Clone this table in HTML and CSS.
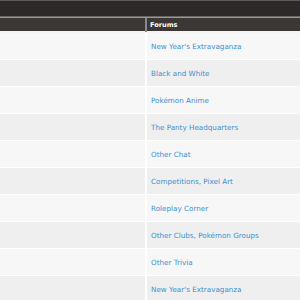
FILE: index.html
```html
<!DOCTYPE html>
<html>
<head>
<meta charset="utf-8">
<link rel="stylesheet" href="styles.css">
</head>
<body>
<div class="topbar"></div>
<div class="table">
  <div class="head">
    <div class="cell first"></div>
    <div class="cell forums">Forums</div>
  </div>
  <div class="row odd"><div class="cell first"></div><div class="cell"><a href="#">New Year's Extravaganza</a></div></div>
  <div class="row even"><div class="cell first"></div><div class="cell"><a href="#">Black and White</a></div></div>
  <div class="row odd"><div class="cell first"></div><div class="cell"><a href="#">Pokémon Anime</a></div></div>
  <div class="row even"><div class="cell first"></div><div class="cell"><a href="#">The Panty Headquarters</a></div></div>
  <div class="row odd"><div class="cell first"></div><div class="cell"><a href="#">Other Chat</a></div></div>
  <div class="row even"><div class="cell first"></div><div class="cell"><a href="#">Competitions</a>, <a href="#">Pixel Art</a></div></div>
  <div class="row odd"><div class="cell first"></div><div class="cell"><a href="#">Roleplay Corner</a></div></div>
  <div class="row even"><div class="cell first"></div><div class="cell"><a href="#">Other Clubs</a>, <a href="#">Pokémon Groups</a></div></div>
  <div class="row odd"><div class="cell first"></div><div class="cell"><a href="#">Other Trivia</a></div></div>
  <div class="row even"><div class="cell first"></div><div class="cell"><a href="#">New Year's Extravaganza</a></div></div>
</div>
</body>
</html>
```
FILE: styles.css
```css
html, body {
  margin: 0;
  padding: 0;
  background: #ffffff;
  font-family: "DejaVu Sans", Verdana, sans-serif;
  overflow: hidden;
}
.topbar {
  height: 15px;
  background: #2c2928;
  border-top: 1px solid #5e5a58;
  border-bottom: 1px solid #6a6664;
}
.table {
  border-top: 1px solid #9a9896;
}
.head {
  display: grid;
  grid-template-columns: 147px 1fr;
  height: 13px;
  background: #3b3735;
  border-bottom: 2px solid #f4f4f4;
}
.head .cell.first {
  border-right: 2px solid #8c8a88;
}
.forums {
  color: #ffffff;
  font-weight: bold;
  font-size: 6.6px;
  line-height: 14px;
  padding-left: 3px;
}
.row {
  display: grid;
  grid-template-columns: 147px 1fr;
  height: 26px;
  border-bottom: 1px solid #ffffff;
}
.row .cell {
  font-size: 7.2px;
  line-height: 27px;
  padding-left: 4px;
  color: #3a8fcf;
}
.row .cell.first {
  padding-left: 0;
  border-right: 2px solid #ffffff;
}
.odd { background: #f7f7f7; }
.even { background: #efefef; }
a {
  color: #3a8fcf;
  text-decoration: none;
}
```
